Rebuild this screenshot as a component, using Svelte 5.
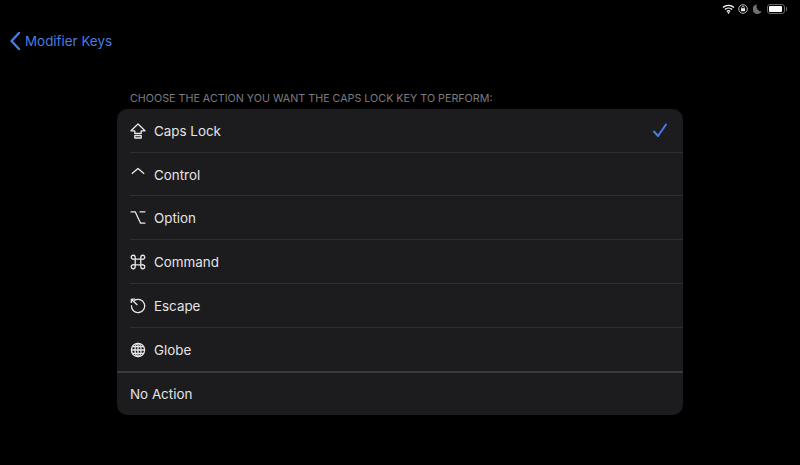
<script>
	const options = [
		{ name: 'Caps Lock', icon: 'caps', checked: true },
		{ name: 'Control', icon: 'control' },
		{ name: 'Option', icon: 'option' },
		{ name: 'Command', icon: 'command' },
		{ name: 'Escape', icon: 'escape' },
		{ name: 'Globe', icon: 'globe' }
	];
</script>

<div class="screen">
	<div class="status">
		<svg class="wifi" width="13" height="10" viewBox="0 0 13 10">
			<path d="M1 3.600a8 8 0 0 1 11 0M2.900 5.600a5.200 5.200 0 0 1 7.200 0M4.800 7.400a2.500 2.500 0 0 1 3.400 0" fill="none" stroke="#fff" stroke-width="1.400" />
			<path d="M6.500 10 5.200 8.600a1.900 1.900 0 0 1 2.600 0z" fill="#fff" />
		</svg>
		<svg class="lock" width="10" height="10" viewBox="0 0 10 10">
			<circle cx="5" cy="5" r="4.300" fill="none" stroke="#bbb" stroke-width="1" />
			<path d="M3 4.200h4v3H3z" fill="#eee" />
			<path d="M3.800 4.200V3.400a1.200 1.200 0 0 1 2.400 0v.8" fill="none" stroke="#eee" stroke-width=".7" />
		</svg>
		<svg class="moon" width="9" height="10" viewBox="0 0 9 10">
			<path d="M4 .4a4.800 4.800 0 1 0 4.600 7A5 5 0 0 1 4 .4z" fill="#6f6f6f" />
		</svg>
		<div class="battery"><div class="level"></div></div>
		<div class="nub"></div>
	</div>

	<nav>
		<svg width="12" height="20" viewBox="0 0 12 20">
			<path d="M10 2 2.500 10l7.500 8" fill="none" stroke="#457de2" stroke-width="2.400" stroke-linecap="round" stroke-linejoin="round" />
		</svg>
		<span>Modifier Keys</span>
	</nav>

	<main>
		<h2>CHOOSE THE ACTION YOU WANT THE CAPS LOCK KEY TO PERFORM:</h2>
		<div class="card">
			{#each options as option}
				<div class="row">
					<div class="inner">
						<svg class="icon" width="16" height="16" viewBox="0 0 16 16">
							{#if option.icon === 'caps'}
								<path d="M8 1 1 7.800h3.800v2.700h6.400V7.800H15z" />
								<path d="M4.800 12.600h6.400v2.400H4.800z" />
							{:else if option.icon === 'control'}
								<path d="M1.800 6.800 8 1.400l6.200 5.400" />
							{:else if option.icon === 'option'}
								<path d="M.6 1.800h4.600l5.400 11.400h4.800M9.600 1.800h5.800" />
							{:else if option.icon === 'command'}
								<path d="M5.200 5.200h5.600v5.600H5.200zM5.200 5.200H3.600a2 2 0 1 1 1.600-1.600zM10.800 5.200V3.600a2 2 0 1 1 1.600 1.600zM10.800 10.800h1.600a2 2 0 1 1-1.600 1.600zM5.200 10.800v1.600a2 2 0 1 1-1.600-1.600z" />
							{:else if option.icon === 'escape'}
								<path d="M4.200 2.600A6.600 6.600 0 1 1 1.500 7.200" />
								<path d="M1.300 1.200 7.300 7M1.300 1.200v3.800M1.300 1.200h3.800" />
							{:else}
								<circle cx="8" cy="8" r="6.600" />
								<ellipse cx="8" cy="8" rx="3" ry="6.600" />
								<path d="M8 1.400v13.200M1.400 8h13.200M2.400 4.700h11.200M2.400 11.300h11.200" />
							{/if}
						</svg>
						<span>{option.name}</span>
						{#if option.checked}
							<svg class="check" width="16" height="15" viewBox="0 0 16 15">
								<path d="M2 8.500 6 13 14 1.500" />
							</svg>
						{/if}
					</div>
				</div>
			{/each}
			<div class="row last"><span>No Action</span></div>
		</div>
	</main>
</div>

<style>
	:global(body) {
		background: #000;
	}

	.screen {
		height: 465px;
		background: #000;
		font-family: Inter, "Liberation Sans", sans-serif;
		overflow: hidden;
	}

	.status {
		display: flex;
		justify-content: flex-end;
		align-items: center;
		height: 10px;
		padding: 4px 13px 0 0;
		gap: 4px;
	}

	.wifi {
		margin-right: -1px;
	}

	.moon {
		margin: 0 1px;
	}

	.battery {
		width: 18px;
		height: 10px;
		box-sizing: border-box;
		border: 1px solid #666;
		border-radius: 3px;
		padding: 1px;
	}

	.level {
		height: 100%;
		width: 90%;
		background: #fff;
		border-radius: 1px;
	}

	.nub {
		width: 1px;
		height: 4px;
		margin-left: -3px;
		background: #666;
	}

	nav {
		display: flex;
		align-items: center;
		gap: 4px;
		height: 20px;
		margin-top: 17px;
		padding-left: 9px;
		color: #457de2;
		font-size: 13.400px;
	}

	main {
		padding: 0 117px;
		margin-top: 40px;
	}

	h2 {
		margin: 0 0 3px 13px;
		height: 15px;
		line-height: 15px;
		font-size: 10.730px;
		font-weight: 400;
		color: #7c7c80;
		white-space: nowrap;
	}

	.card {
		height: 306px;
		display: flex;
		flex-direction: column;
		background: #1c1c1e;
		border-radius: 10px;
		overflow: hidden;
	}

	.row {
		flex: none;
		height: 43.714px;
		box-sizing: border-box;
		padding-left: 13px;
		color: #e4e4e6;
		font-size: 13.400px;
		display: flex;
	}

	.inner {
		flex: 1;
		display: flex;
		align-items: center;
		gap: 8px;
		padding-top: 1px;
		border-bottom: 1px solid #2f2f31;
		box-sizing: border-box;
	}

	.row:nth-child(6) .inner {
		border-bottom: none;
	}

	.last {
		align-items: center;
		padding-top: 1px;
		box-shadow: inset 0 2px 0 #3a3a3c;
	}

	.icon {
		fill: none;
		stroke: #e8e8ea;
		stroke-width: 1.300;
		stroke-linejoin: round;
		flex: none;
	}

	.check {
		margin-left: auto;
		margin-right: 15px;
		fill: none;
		stroke: #457de2;
		stroke-width: 2;
		stroke-linecap: round;
		stroke-linejoin: round;
	}
</style>
